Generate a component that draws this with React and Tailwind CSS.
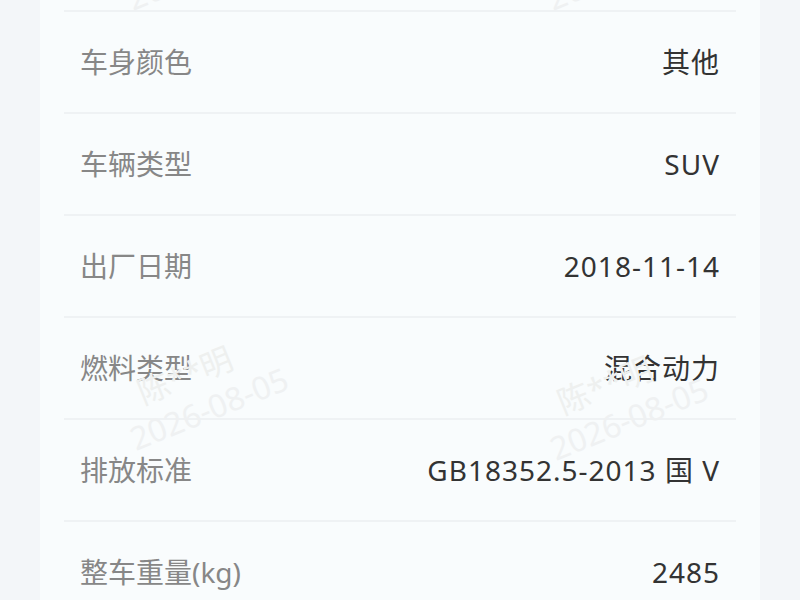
import React from "react";

const rows = [
  { label: "车身颜色", value: "其他" },
  { label: "车辆类型", value: "SUV" },
  { label: "出厂日期", value: "2018-11-14" },
  { label: "燃料类型", value: "混合动力" },
  { label: "排放标准", value: "GB18352.5-2013 国 V" },
  { label: "整车重量(kg)", value: "2485" },
];

// faint rotated watermark stamped over the card
const Watermark = ({ className }) => (
  <div
    className={
      "pointer-events-none absolute flex flex-col items-start -rotate-[22deg] text-[32px] leading-[40px] text-[#eff1f2] select-none " +
      className
    }
  >
    <span className="pl-6 text-[#eef0ef]">陈**明</span>
    <span>2026-08-05</span>
  </div>
);

export default function App() {
  return (
    <div
      className="relative h-[600px] w-[800px] overflow-hidden bg-[#f3f6f9]"
      style={{ fontFamily: '"Noto Sans", "Noto Sans CJK SC", sans-serif' }}
    >
      <div className="relative mx-10 h-full bg-[#f9fcfd]">
        <div className="mx-6 h-[12px] border-b-2 border-[#eff2f4]" />
        {rows.map((row) => (
          <div
            key={row.label}
            className="mx-6 flex h-[102px] items-center justify-between border-b-2 border-[#eff2f4] px-4"
          >
            <span className="text-[28px] text-[#878787]">{row.label}</span>
            <span className="text-[28px] tracking-[1px] text-[#333333]">{row.value}</span>
          </div>
        ))}
      </div>

      <Watermark className="left-[115px] top-[-90px]" />
      <Watermark className="left-[535px] top-[-90px]" />
      <Watermark className="left-[118px] top-[350px]" />
      <Watermark className="left-[538px] top-[360px]" />
    </div>
  );
}
